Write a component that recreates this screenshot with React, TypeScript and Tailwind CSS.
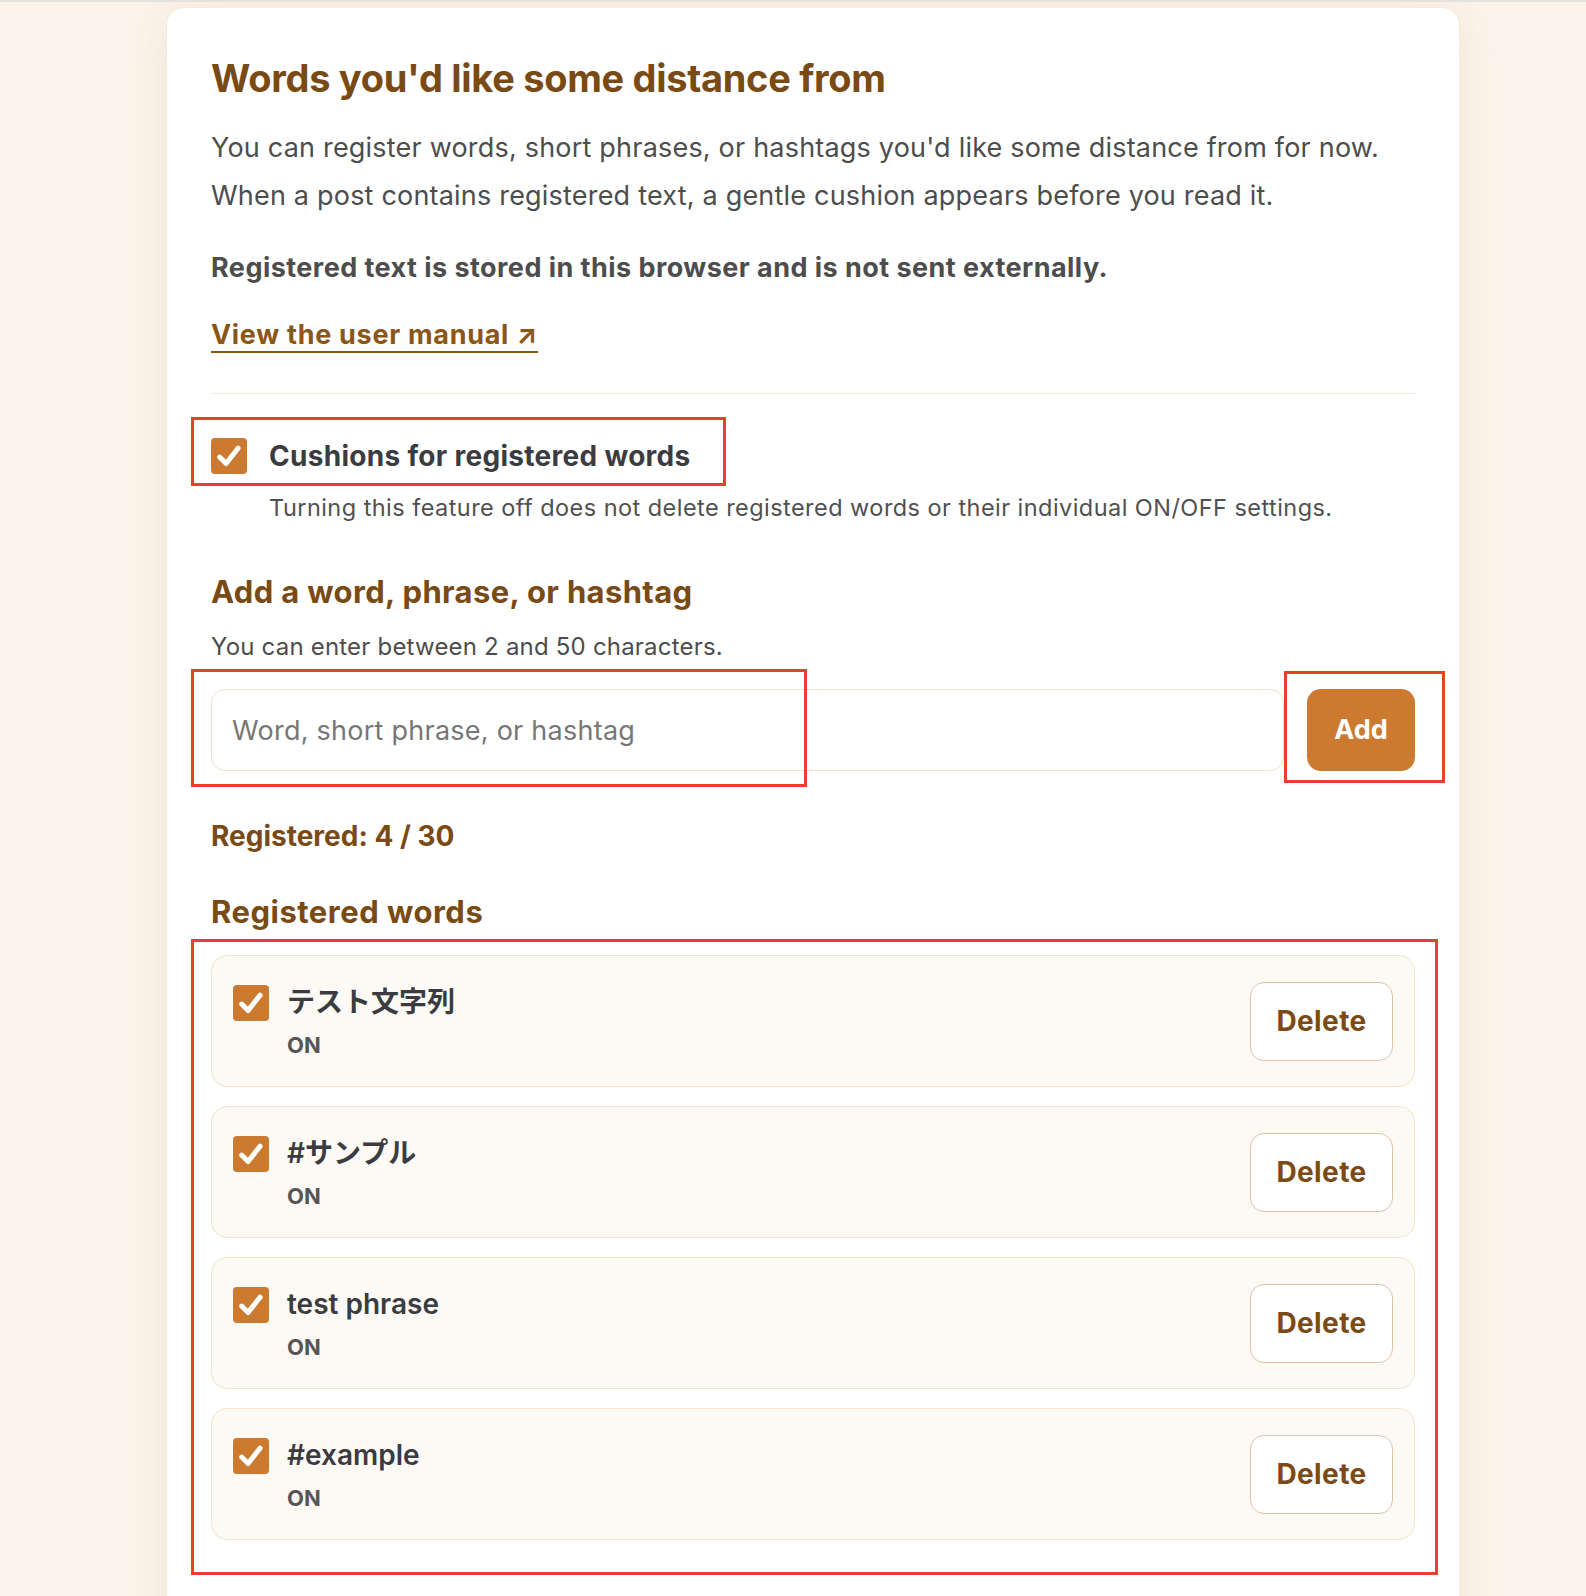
import { useState } from 'react'

type Word = { id: number; text: string; on: boolean }

const initialWords: Word[] = [
  { id: 1, text: 'テスト文字列', on: true },
  { id: 2, text: '#サンプル', on: true },
  { id: 3, text: 'test phrase', on: true },
  { id: 4, text: '#example', on: true },
]

function Check({ checked, onClick }: { checked: boolean; onClick?: () => void }) {
  return (
    <button
      type="button"
      onClick={onClick}
      className={`flex h-[36px] w-[36px] shrink-0 items-center justify-center rounded-[4px] ${
        checked ? 'bg-[#cb7a2f]' : 'border-2 border-[#cb7a2f] bg-white'
      }`}
    >
      {checked && (
        <svg viewBox="0 0 24 24" className="h-[32px] w-[32px]" fill="none">
          <polyline
            points="5,12.8 9.8,17.6 18.8,6.2"
            stroke="white"
            strokeWidth={3.8}
            strokeLinecap="round"
            strokeLinejoin="round"
          />
        </svg>
      )}
    </button>
  )
}

export default function App() {
  const [enabled, setEnabled] = useState(true)
  const [words, setWords] = useState<Word[]>(initialWords)
  const [value, setValue] = useState('')

  const addWord = () => {
    const v = value.trim()
    if (v.length < 2 || v.length > 50 || words.length >= 30) return
    setWords([...words, { id: Date.now(), text: v, on: true }])
    setValue('')
  }

  return (
    <div
      className="relative h-[1596px] overflow-hidden border-t-[2px] border-[#e4e2df] bg-[#fcf4eb]"
      style={{ fontFamily: 'Inter, "Noto Sans CJK JP", sans-serif' }}
    >
      {/* Card */}
      <div className="ml-[166px] mt-[5px] min-h-[1700px] w-[1294px] rounded-[18px] border border-[#f6eadb] bg-white px-[44px] pt-[48px] shadow-[0_0_48px_rgba(190,140,90,0.14)]">
        <h1 className="text-[38px] font-bold leading-[44px] tracking-[-0.3px] text-[#7a4a15]">
          Words you'd like some distance from
        </h1>
        <p className="mt-[24px] text-[27px] leading-[48px] tracking-[0.2px] text-[#4d4d4d]">
          You can register words, short phrases, or hashtags you'd like some distance from for now.
          <br />
          When a post contains registered text, a gentle cushion appears before you read it.
        </p>
        <p className="mt-[24px] text-[27px] font-bold leading-[48px] tracking-[0.45px] text-[#4d4d4d]">
          Registered text is stored in this browser and is not sent externally.
        </p>
        <a
          href="#"
          className="mt-[23px] inline-block text-[27px] font-bold leading-[40px] tracking-[0.7px] text-[#8a5719] underline decoration-[2px] underline-offset-[7px]"
        >
          View the user manual ↗
        </a>

        <div className="mt-[38px] h-px w-full bg-[#f2e9df]" />

        {/* Global toggle */}
        <div className="mt-[44px] flex items-center gap-[22px]">
          <Check checked={enabled} onClick={() => setEnabled(!enabled)} />
          <span className="text-[28px] font-bold leading-[36px] tracking-[0.3px] text-[#3b3b42]">
            Cushions for registered words
          </span>
        </div>
        <p className="ml-[58px] mt-[16px] text-[23.5px] leading-[36px] tracking-[0.45px] text-[#505050]">
          Turning this feature off does not delete registered words or their individual ON/OFF settings.
        </p>

        {/* Add form */}
        <h2 className="mt-[46px] text-[31px] font-bold leading-[40px] tracking-[0.35px] text-[#7a4a15]">
          Add a word, phrase, or hashtag
        </h2>
        <p className="mt-[18px] text-[24px] leading-[34px] tracking-[0.2px] text-[#4d4d4d]">
          You can enter between 2 and 50 characters.
        </p>
        <div className="mt-[25px] flex gap-[23px]">
          <input
            value={value}
            onChange={(e) => setValue(e.target.value)}
            placeholder="Word, short phrase, or hashtag"
            className="h-[82px] flex-1 rounded-[14px] border border-[#f3e2c6] px-[20px] text-[27px] tracking-[0.25px] text-[#333] outline-none placeholder:text-[#777]"
          />
          <button
            type="button"
            onClick={addWord}
            className="h-[82px] w-[108px] rounded-[14px] bg-[#cc7a30] text-[27px] font-bold text-white"
          >
            Add
          </button>
        </div>

        <p className="mt-[47px] text-[28px] font-bold leading-[36px] text-[#7a4a15]">
          Registered: {words.length} / 30
        </p>

        <h2 className="mt-[38px] text-[31px] font-bold leading-[40px] tracking-[0.5px] text-[#7a4a15]">
          Registered words
        </h2>

        <ul className="mt-[23px] flex flex-col gap-[19px]">
          {words.map((w) => (
            <li
              key={w.id}
              className="flex h-[132px] items-center justify-between rounded-[16px] border border-[#f6e3c8] bg-[#fdfaf6] pl-[21px] pr-[21px]"
            >
              <div className="flex items-start gap-[18px] self-start pt-[29px]">
                <Check
                  checked={w.on}
                  onClick={() =>
                    setWords(words.map((x) => (x.id === w.id ? { ...x, on: !x.on } : x)))
                  }
                />
                <div>
                  <div className="text-[28px] font-semibold leading-[34px] text-[#3b3b42]">
                    {w.text}
                  </div>
                  <div className="mt-[12px] text-[22px] font-bold leading-[28px] text-[#555]">
                    {w.on ? 'ON' : 'OFF'}
                  </div>
                </div>
              </div>
              <button
                type="button"
                onClick={() => setWords(words.filter((x) => x.id !== w.id))}
                className="h-[79px] w-[143px] rounded-[14px] border border-[#e2c2a4] bg-white text-[28px] font-bold tracking-[0.4px] text-[#7c4a17]"
              >
                Delete
              </button>
            </li>
          ))}
        </ul>
      </div>

      {/* Annotation boxes */}
      <div className="pointer-events-none absolute left-[191px] top-[415px] h-[69px] w-[535px] border-[3px] border-[#e8412b]" />
      <div className="pointer-events-none absolute left-[191px] top-[667px] h-[118px] w-[616px] border-[3px] border-[#e8412b]" />
      <div className="pointer-events-none absolute left-[1284px] top-[669px] h-[112px] w-[161px] border-[3px] border-[#e8412b]" />
      <div className="pointer-events-none absolute left-[191px] top-[937px] h-[636px] w-[1247px] border-[3px] border-[#e8412b]" />
    </div>
  )
}
